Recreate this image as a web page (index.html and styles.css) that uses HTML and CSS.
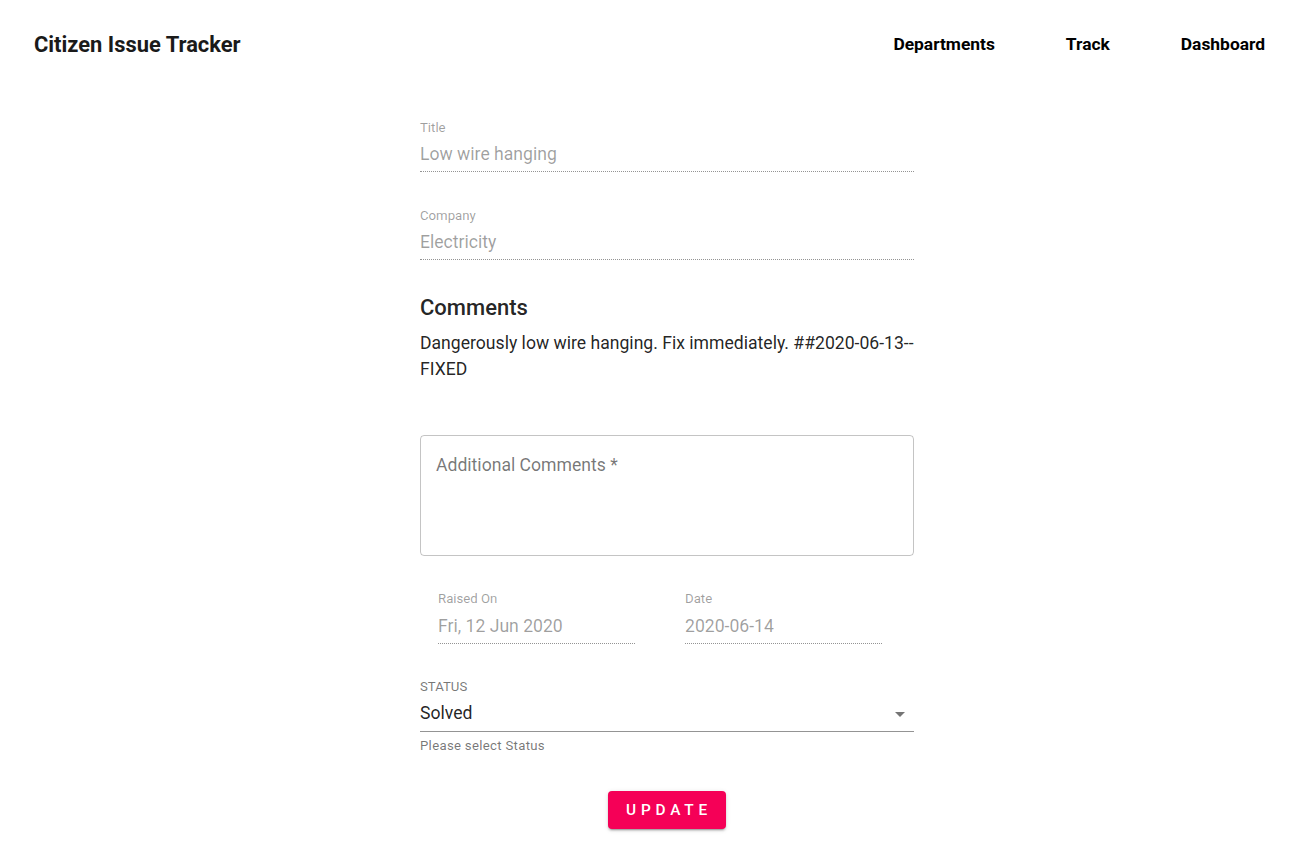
FILE: index.html
```html
<!DOCTYPE html>
<html lang="en">
<head>
<meta charset="utf-8">
<title>Citizen Issue Tracker</title>
<link rel="stylesheet" href="styles.css">
</head>
<body>
<header class="topbar">
  <div class="brand">Citizen Issue Tracker</div>
  <nav class="nav">
    <a class="nav-link" href="#">Departments</a>
    <a class="nav-link" href="#">Track</a>
    <a class="nav-link" href="#">Dashboard</a>
  </nav>
</header>
<main class="page">
  <form class="form">
    <div class="field">
      <label class="field-label">Title</label>
      <div class="field-input">Low wire hanging</div>
    </div>
    <div class="field field-gap">
      <label class="field-label">Company</label>
      <div class="field-input">Electricity</div>
    </div>
    <h2 class="comments-title">Comments</h2>
    <p class="comments-body">Dangerously low wire hanging. Fix immediately. ##2020-06-13--FIXED</p>
    <div class="outlined">
      <span class="outlined-label">Additional Comments *</span>
    </div>
    <div class="date-row">
      <div class="field date-field">
        <label class="field-label">Raised On</label>
        <div class="field-input">Fri, 12 Jun 2020</div>
      </div>
      <div class="field date-field">
        <label class="field-label">Date</label>
        <div class="field-input">2020-06-14</div>
      </div>
    </div>
    <div class="select-field">
      <label class="select-label">STATUS</label>
      <div class="select-input">
        <span class="select-value">Solved</span>
        <svg class="select-icon" viewBox="0 0 24 24" width="24" height="24"><path d="M7 10l5 5 5-5z"/></svg>
      </div>
      <div class="helper">Please select Status</div>
    </div>
    <div class="actions">
      <button type="button" class="btn">Update</button>
    </div>
  </form>
</main>
</body>
</html>
```
FILE: styles.css
```css
* { box-sizing: border-box; }
html, body { margin: 0; padding: 0; background: #fff; }
body {
  font-family: Roboto, "Liberation Sans", Arial, sans-serif;
  color: rgba(0,0,0,0.87);
}
.topbar {
  height: 88px;
  display: flex;
  align-items: center;
  justify-content: space-between;
  padding: 0 39px 0 34px;
}
.brand {
  font-size: 21.9px;
  font-weight: 700;
  color: #1a1a1a;
}
.nav { display: flex; gap: 71px; }
.nav-link {
  font-size: 17.4px;
  font-weight: 700;
  color: #000;
  text-decoration: none;
}
.page {
  display: flex;
  justify-content: center;
  padding-left: 30px;
}
.form {
  width: 494px;
  padding-top: 33px;
  padding-bottom: 30px;
}
.field { display: flex; flex-direction: column; }
.field-gap { margin-top: 37px; }
.field-label {
  font-size: 13.2px;
  line-height: 14px;
  color: rgba(0,0,0,0.38);
}
.field-input {
  margin-top: 10px;
  font-size: 17.6px;
  line-height: 19px;
  color: rgba(0,0,0,0.38);
  padding-bottom: 7px;
  border-bottom: 1px dotted rgba(0,0,0,0.42);
}
.comments-title {
  margin: 36px 0 0;
  font-size: 22px;
  line-height: 24px;
  font-weight: 500;
  color: rgba(0,0,0,0.87);
}
.comments-body {
  margin: 10px 0 0;
  font-size: 17.6px;
  line-height: 26px;
  color: rgba(0,0,0,0.87);
}
.outlined {
  margin-top: 53px;
  height: 121px;
  border: 1px solid rgba(0,0,0,0.23);
  border-radius: 4px;
  padding: 20px 15px;
}
.outlined-label {
  font-size: 17.6px;
  line-height: 19px;
  color: rgba(0,0,0,0.54);
}
.date-row {
  margin-top: 36px;
  display: flex;
  gap: 50px;
  padding-left: 18px;
}
.date-field { width: 197px; }
.date-field .field-input { margin-top: 11px; padding-bottom: 7px; }
.select-field { margin-top: 36px; }
.select-label {
  display: block;
  font-size: 13.2px;
  line-height: 14px;
  color: rgba(0,0,0,0.54);
}
.select-input {
  margin-top: 10px;
  display: flex;
  align-items: center;
  justify-content: space-between;
  border-bottom: 1px solid rgba(0,0,0,0.42);
  padding-bottom: 8px;
  height: 28px;
}
.select-value {
  font-size: 17.6px;
  line-height: 19px;
  color: rgba(0,0,0,0.87);
}
.select-icon {
  fill: rgba(0,0,0,0.54);
  margin-right: 2px;
}
.helper {
  margin-top: 7px;
  font-size: 13.2px;
  line-height: 14px;
  color: rgba(0,0,0,0.54);
  letter-spacing: 0.3px;
}
.actions {
  margin-top: 38px;
  display: flex;
  justify-content: center;
}
.btn {
  height: 38px;
  width: 118px;
  border: none;
  border-radius: 4px;
  background: #f50057;
  color: #fff;
  font-family: Roboto, "Liberation Sans", Arial, sans-serif;
  font-size: 15.4px;
  font-weight: 500;
  text-transform: uppercase;
  letter-spacing: 4.8px;
  padding: 0 0 0 4px;
  box-shadow: 0 3px 1px -2px rgba(0,0,0,0.2), 0 2px 2px 0 rgba(0,0,0,0.14), 0 1px 5px 0 rgba(0,0,0,0.12);
}
```
